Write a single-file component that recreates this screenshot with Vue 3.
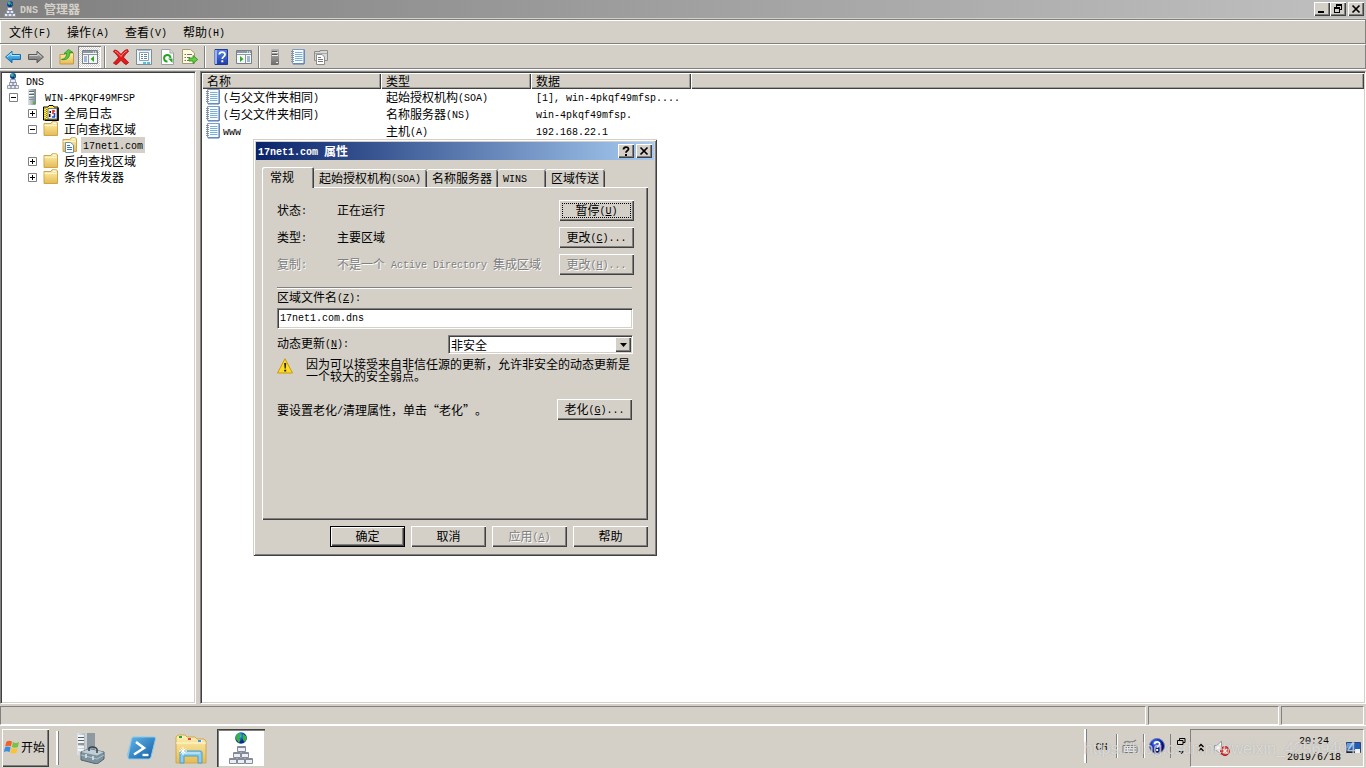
<script setup>
import { h, ref } from 'vue'

// Renders mixed Chinese / Latin text; "&" marks the mnemonic letter.
const Txt = ({ t }) => {
  const parts = t.match(/[\x20-\x7e]+|[^\x20-\x7e]+/g) || []
  return h('span', { class: 'txt' }, parts.map((part) => {
    if (!/^[\x20-\x7e]/.test(part)) return part
    const i = part.indexOf('&')
    if (i < 0) return h('span', { class: 'latin' }, part)
    return h('span', { class: 'latin' }, [part.slice(0, i), h('u', part[i + 1]), part.slice(i + 2)])
  }))
}
Txt.props = ['t']

const menus = ['文件(F)', '操作(A)', '查看(V)', '帮助(H)']

const toolGroups = [
  [{ id: 'back', label: '后退' }, { id: 'forward', label: '前进' }],
  [{ id: 'up', label: '上一级' }, { id: 'panel-left', label: '显示/隐藏控制台树', on: true }],
  [
    { id: 'delete', label: '删除' },
    { id: 'props', label: '属性' },
    { id: 'refresh', label: '刷新' },
    { id: 'export', label: '导出列表' }
  ],
  [{ id: 'help', label: '帮助' }, { id: 'panel-right', label: '显示/隐藏操作窗格' }],
  [{ id: 'server-gray', label: '新建服务器' }, { id: 'record', label: '新建记录' }, { id: 'copy', label: '新建区域' }]
]

const tree = [
  { level: 0, icon: 'dns', text: 'DNS' },
  { level: 1, icon: 'server', text: 'WIN-4PKQF49MFSP', box: '−' },
  { level: 2, icon: 'log', text: '全局日志', box: '+' },
  { level: 2, icon: 'folder', text: '正向查找区域', box: '−' },
  { level: 3, icon: 'zone', text: '17net1.com', selected: true },
  { level: 2, icon: 'folder', text: '反向查找区域', box: '+' },
  { level: 2, icon: 'folder', text: '条件转发器', box: '+' }
]

const columns = ['名称', '类型', '数据']
const records = [
  ['(与父文件夹相同)', '起始授权机构(SOA)', '[1], win-4pkqf49mfsp....'],
  ['(与父文件夹相同)', '名称服务器(NS)', 'win-4pkqf49mfsp.'],
  ['www', '主机(A)', '192.168.22.1']
]

const tabs = ['常规', '起始授权机构(SOA)', '名称服务器', 'WINS', '区域传送']
const activeTab = ref(0)
const status = [
  { label: '状态:', value: '正在运行', button: '暂停(&U)', focus: true },
  { label: '类型:', value: '主要区域', button: '更改(&C)...' },
  { label: '复制:', value: '不是一个 Active Directory 集成区域', button: '更改(&H)...', disabled: true }
]
const footer = [
  { text: '确定', primary: true },
  { text: '取消' },
  { text: '应用(&A)', disabled: true },
  { text: '帮助' }
]
const fileName = ref('17net1.com.dns')
const update = ref('非安全')
</script>

<template>
  <div class="desktop">
    <svg class="defs" aria-hidden="true">
      <defs>
        <linearGradient id="gBlue" x2="0" y2="1"><stop stop-color="#7fd0f8" /><stop offset="1" stop-color="#0f7fcc" /></linearGradient>
        <linearGradient id="gGray" x2="0" y2="1"><stop stop-color="#b4b4b4" /><stop offset="1" stop-color="#6c6c6c" /></linearGradient>
        <linearGradient id="gFolder" x2="0" y2="1"><stop stop-color="#fdf0b4" /><stop offset="1" stop-color="#e6bb52" /></linearGradient>
        <linearGradient id="gHelp" x2="0" y2="1"><stop stop-color="#5a84e8" /><stop offset="1" stop-color="#1c3cac" /></linearGradient>
        <linearGradient id="gServer"><stop stop-color="#dfe5e8" /><stop offset="1" stop-color="#7b878d" /></linearGradient>
        <linearGradient id="gPs" x2="1" y2="1"><stop stop-color="#63b7e8" /><stop offset="1" stop-color="#0f5ca5" /></linearGradient>
        <radialGradient id="gGlobe" cx=".35" cy=".3"><stop stop-color="#8fd8ff" /><stop offset=".5" stop-color="#1e74d8" /><stop offset="1" stop-color="#062c90" /></radialGradient>
        <radialGradient id="gBall" cx=".4" cy=".3"><stop stop-color="#6f8cf4" /><stop offset=".6" stop-color="#1032c0" /><stop offset="1" stop-color="#04126c" /></radialGradient>
      </defs>
      <symbol id="back" viewBox="0 0 16 16"><path d="M.5 8 7 2.200V5.500H15.500V10.500H7V13.800Z" fill="url(#gBlue)" stroke="#1a6ea8" /><path d="M2 8 6.300 4.300V6.500H14.500" fill="none" stroke="#b5e6ff" /></symbol>
      <symbol id="forward" viewBox="0 0 16 16"><path d="M15.500 8 9 2.200V5.500H.5V10.500H9V13.800Z" fill="url(#gGray)" stroke="#5a5a5a" /><path d="M1.500 6.500H9.900V4.700L13.500 8" fill="none" stroke="#cfcfcf" /></symbol>
      <symbol id="up" viewBox="0 0 16 16"><path d="M1 5.500H6L7.500 4H14.500V15H1Z" fill="url(#gFolder)" stroke="#c39a40" /><path d="M2.500 10.500C6 10 7.500 8 7.500 4.500H5L9.500 .5 14 3.500H10.800C11 8.500 8 11.500 2.500 10.500Z" fill="#5cc83c" stroke="#25851c" stroke-width=".7" /></symbol>
      <symbol id="panel-left" viewBox="0 0 16 16"><path d="M.5 1.500H15.500V14.500H.5Z" fill="#f5f7f9" stroke="#75818d" /><path d="M1 2H15V4H1Z" fill="#8b97a3" /><path d="M11 3H12M13 3H14" stroke="#fff" /><path d="M1 5H15V6H1ZM6 6H7V14H6Z" fill="#8b97a3" /><path d="M2 8H5M2 10H5M2 12H5" stroke="#5574b0" /><path d="M12 7V13L8.500 10Z" fill="#3ba51f" /></symbol>
      <symbol id="panel-right" viewBox="0 0 16 16"><path d="M.5 1.500H15.500V14.500H.5Z" fill="#f5f7f9" stroke="#75818d" /><path d="M1 2H15V4H1Z" fill="#8b97a3" /><path d="M11 3H12M13 3H14" stroke="#fff" /><path d="M1 5H15V6H1ZM9 6H10V14H9Z" fill="#8b97a3" /><path d="M11 8H14M11 10H14M11 12H14" stroke="#5574b0" /><path d="M4 7V13L7.500 10Z" fill="#3ba51f" /></symbol>
      <symbol id="delete" viewBox="0 0 16 16"><path d="M1.500 1C4 1 6 3 8 5.500 10 3 12 .5 14.500 .5L15.500 2.500C13.500 4 11.800 6 10.500 8.300 12.500 10.500 14 12 15.700 13.500L13 15.700C11 14.500 9.500 13 8 11.200 6.500 13 5 14.700 3 15.700L.3 14C2.500 12.500 4 10.500 5.500 8.300 3.700 5.500 2.200 4 .4 2.800Z" fill="#e01b1b" stroke="#a30808" stroke-width=".7" /><path d="M2 2.300C4 3 6 5 8 7.500 9.500 5 11.500 3 13.800 2" fill="none" stroke="#ff8a80" /></symbol>
      <symbol id="props" viewBox="0 0 16 16"><path d="M.5.5H15.500V15.500H.5Z" fill="#eef4f8" stroke="#7d8d99" /><path d="M3.500 3.500H12.500V11.500H3.500Z" fill="#fff" stroke="#8da4b4" /><path d="M5 5.500H7M8 5.500H11M5 7.500H7M8 7.500H11M5 9.500H7M8 9.500H11" stroke="#5b86a5" /><path d="M2 1.500H14" stroke="#aabccb" /><path d="M7 13H10V15H7ZM11 13H14V15H11Z" fill="#58bce8" /></symbol>
      <symbol id="refresh" viewBox="0 0 16 16"><path d="M2.500.5H11L14.500 4V15.500H2.500Z" fill="#fff" stroke="#9aa1a8" /><path d="M11 .5V4H14.500" fill="#e4e4e4" stroke="#9aa1a8" /><path d="M11.500 9A3.200 3.200 0 1 0 8.500 12.500" fill="none" stroke="#27a427" stroke-width="2" /><path d="M9 9.500H13.500V14Z" fill="#27a427" /></symbol>
      <symbol id="export" viewBox="0 0 16 16"><path d="M.5.5H8.500L12.500 4V14.500H.5Z" fill="#fffbe0" stroke="#a39a75" /><path d="M2.500 5.500H4M5 5.500H10M2.500 8.500H4M5 8.500H8M2.500 11.500H4M5 11.500H8" stroke="#77736a" /><path d="M7 9H11V6.500L15.700 10.500 11 14.500V12H7Z" fill="#66cc42" stroke="#258c1c" stroke-width=".8" /></symbol>
      <symbol id="help" viewBox="0 0 16 16"><path d="M2 .5H14.500V15.500H2Z" fill="url(#gHelp)" stroke="#233d91" /><path d="M2 1H4V15H2Z" fill="#9ab4f2" /><path d="M6.300 5.500C6.300 2.300 12 2.200 12 5.500 12 7.800 9.300 7.500 9.300 10" fill="none" stroke="#fff" stroke-width="1.800" /><path d="M8.300 11.300H10.300V13.300H8.300Z" fill="#fff" /></symbol>
      <symbol id="server" viewBox="0 0 16 16"><path d="M4 1 5 0H12V15L11 16H4Z" fill="url(#gServer)" /><path d="M5 2.500H10M5 5.500H10" stroke="#596870" /><path d="M5 3.500H10M5 6.500H10" stroke="#fff" /><path d="M5 8.500H10M5 10.500H10" stroke="#87959b" /><path d="M9 13H11V15H9Z" fill="#44bd36" /></symbol>
      <symbol id="server-gray" viewBox="0 0 16 16"><path d="M4 1 5 0H12V15L11 16H4Z" fill="url(#gGray)" /><path d="M5 3.500H11M5 6.500H11" stroke="#eee" /><path d="M5 2.500H10M5 5.500H10" stroke="#555" /><path d="M9 13H11V14H9Z" fill="#eee" /></symbol>
      <symbol id="record" viewBox="0 0 16 16"><path d="M2.500.5H14.500V14.500H2.500Z" fill="#f8fcff" stroke="#7d9cc8" /><path d="M14 1V15H3" fill="none" stroke="#5577ae" /><path d="M5 3.500H12.500M5 5.500H12.500M5 7.500H12.500M5 9.500H12.500M5 11.500H12.500" stroke="#79b2d8" /><path d="M1 2.500H4M1 4.500H4M1 6.500H4M1 8.500H4M1 10.500H4M1 12.500H4" stroke="#8a9299" /></symbol>
      <symbol id="copy" viewBox="0 0 16 16"><path d="M1.500 2.500H7V1.500H14.500V11.500H1.500Z" fill="#d8d8d8" stroke="#8c8c8c" /><path d="M2 4.500H14" stroke="#aaa" /><path d="M3.500 5.500H9L11.500 8V15.500H3.500Z" fill="#fff" stroke="#8c8c8c" /><path d="M5 8.500H8M5 10.500H10M5 12.500H10" stroke="#777" /></symbol>
      <symbol id="folder" viewBox="0 0 16 16"><path d="M1 2.500H8L9 .8H13.500L14.500 2V14.500H1Z" fill="url(#gFolder)" stroke="#d0a44a" /><path d="M10 2H13" stroke="#fff" /><path d="M1.500 4.500H14" stroke="#fff5ca" /></symbol>
      <symbol id="zone" viewBox="0 0 16 16"><use href="#folder" /><path d="M3.500 5.500H8.500L11.500 8V15.500H3.500Z" fill="#fff" stroke="#6b8eb5" /><path d="M5 8.500H8M5 10.500H10M5 12.500H10" stroke="#3674c0" /></symbol>
      <symbol id="log" viewBox="0 0 16 16"><path d="M.5 2H5L6 .5H10L11 2H15V15H.5Z" fill="#ffee54" stroke="#000" /><path d="M5 3.500H14V14H5Z" fill="#f4f4f4" stroke="#777" /><path d="M15 3V15.500H2" fill="none" stroke="#000" stroke-width="1.500" /><path d="M2 3V14M3.500 4V14" stroke="#8a7a00" stroke-dasharray="1 1" /><path d="M6.500 6H8V8H6.500ZM6 9H7.500V12H6Z" fill="#111" /><path d="M10 5V9M10 6H12" stroke="#d22" stroke-width="1.500" /><path d="M11.500 8V12M9 12H12" stroke="#2345d5" stroke-width="1.500" /></symbol>
      <symbol id="dns" viewBox="0 0 16 16"><circle cx="8" cy="3" r="3" fill="url(#gGlobe)" /><path d="M6 1.500 8 1 8.500 3 7 4ZM9 3 10.500 2 10 5Z" fill="#43b83c" /><path d="M5.500 6.500H10.500V9.500H5.500ZM4.500 9.500H8V12.500H4.500ZM8 9.500H11.500V12.500H8ZM2.500 12.500H6V15.500H2.500ZM6 12.500H10V15.500H6ZM10 12.500H13.500V15.500H10Z" fill="#e9ebef" stroke="#8289a0" stroke-width=".8" /></symbol>
      <symbol id="dns-big" viewBox="0 0 32 32">
        <circle cx="16" cy="6" r="5.800" fill="url(#gGlobe)" /><path d="M11.500 3 15 .8 16 3 14 6 15.500 8 14 11 11 7ZM18 2 21 4 21.500 8 19 10 17.500 6Z" fill="#39b538" />
        <g fill="#eceef1" stroke="#858b98"><path d="M12.500 14.500H20.500V19.500H12.500ZM8.500 20.500H15.500V25.500H8.500ZM16.500 20.500H23.500V25.500H16.500ZM4.500 26.500H11.500V31.500H4.500ZM12.500 26.500H19.500V31.500H12.500ZM20.500 26.500H27.500V31.500H20.500Z" /></g>
        <path d="M13 15.500H20M9 21.500H15M17 21.500H23M5 27.500H11M13 27.500H19M21 27.500H27" stroke="#858b98" />
      </symbol>
    </svg>

    <header class="titlebar">
      <svg class="ic"><use href="#dns" /></svg>
      <h1><Txt t="DNS 管理器" /></h1>
      <div class="winbtns">
        <button class="cap" aria-label="最小化"><svg viewBox="0 0 12 10"><path d="M2 7H8V9H2Z" /></svg></button>
        <button class="cap" aria-label="还原"><svg viewBox="0 0 12 10"><path d="M4 0H10V6H8V5H9V2H5V3H4ZM2 3H8V9H2ZM3 5V8H7V5Z" fill-rule="evenodd" /></svg></button>
        <button class="cap gap" aria-label="关闭"><svg viewBox="0 0 12 10"><path d="M2.500 1.500 9.500 8.500M9.500 1.500 2.500 8.500" stroke="#000" stroke-width="1.700" /></svg></button>
      </div>
    </header>

    <nav class="menubar">
      <button v-for="m in menus" :key="m"><Txt :t="m" /></button>
    </nav>

    <div class="toolbar" role="toolbar">
      <div v-for="(g, i) in toolGroups" :key="i" class="group">
        <button v-for="b in g" :key="b.id" :class="{ on: b.on }" :aria-label="b.label">
          <svg class="ic"><use :href="'#' + b.id" /></svg>
        </button>
      </div>
    </div>

    <main class="panes">
      <ul class="tree" role="tree">
        <li v-for="n in tree" :key="n.text" role="treeitem" :class="['level' + n.level, { selected: n.selected }]">
          <button v-if="n.box" class="expander" :aria-label="n.box === '+' ? '展开' : '折叠'">
            <svg viewBox="0 0 9 9"><path d="M.5.5H8.500V8.500H.5Z" fill="#fff" stroke="#808080" /><path d="M2 4.500H7" stroke="#000" /><path v-if="n.box === '+'" d="M4.500 2V7" stroke="#000" /></svg>
          </button>
          <svg class="ic"><use :href="'#' + n.icon" /></svg>
          <span class="node"><Txt :t="n.text" /></span>
        </li>
      </ul>

      <section class="list">
        <table>
          <colgroup><col class="c1" /><col class="c2" /><col class="c3" /><col /></colgroup>
          <thead>
            <tr><th v-for="c in columns" :key="c"><Txt :t="c" /></th><th class="rest"></th></tr>
          </thead>
          <tbody>
            <tr v-for="(r, i) in records" :key="i">
              <td><div class="name"><svg class="ic"><use href="#record" /></svg><Txt :t="r[0]" /></div></td>
              <td><Txt :t="r[1]" /></td>
              <td><Txt :t="r[2]" /></td>
              <td></td>
            </tr>
          </tbody>
        </table>
      </section>
    </main>

    <div class="statusbar"><div></div><div></div><div></div></div>

    <footer class="taskbar">
      <button class="start">
        <svg viewBox="0 0 18 18"><path d="M2.500 3.500C4.500 2 6.500 2 8.500 3.300L7.300 8.500C5.500 7.300 3.500 7.300 1.200 8.500Z" fill="#f0622d" /><path d="M9.500 3.800C11.500 5 13.500 5 16 3.800L14.700 9C12.500 10.200 10.300 10 8.300 9Z" fill="#7bc142" /><path d="M1 9.500C3 8.300 5 8.300 7 9.500L5.800 14.500C4 13.300 2 13.300-.2 14.500Z" fill="#3a8de0" /><path d="M8 10C10 11.200 12 11.200 14.400 10L13.200 15.200C11 16.300 9 16.300 6.800 15Z" fill="#fcc42c" /></svg>
        <Txt t="开始" />
      </button>
      <span class="grip"></span>
      <div class="apps">
        <button aria-label="服务器管理器">
          <svg viewBox="0 0 32 32"><path d="M2 1H20V23H2Z" fill="url(#gServer)" /><path d="M3 4H9M3 7H9M3 10H9M3 15H9M3 18H9" stroke="#fff" stroke-width="1.500" /><path d="M3 5.500H9M3 8.500H9M3 12H9" stroke="#53626a" /><path d="M10 1H20V22H10Z" fill="#8e9a9f" /><path d="M10 1H12V22H10Z" fill="#c9d1d5" /><path d="M6 20 14 17 29 20V27L22 32 6 28Z" fill="#7d929f" stroke="#52636f" /><path d="M6 20 14 17 29 20 22 23.500Z" fill="#c0ced5" /><path d="M14 19V16C15 14 21 15 22 17V21" fill="none" stroke="#34434c" stroke-width="1.500" /><path d="M6 23 22 27 29 23" fill="none" stroke="#b3c3cc" /><path d="M11 22V26M18 24V28" stroke="#e2e9ec" stroke-width="1.500" /></svg>
        </button>
        <button aria-label="PowerShell">
          <svg viewBox="0 0 32 32"><path d="M2 24 6 10M3.500 25 8 8" stroke="#8cc4e6" /><path d="M8.500 5H29Q31 5 30.500 7L26 25Q25.500 27 23.500 27H4.500Q2.500 27 3 25L6.500 7Q7 5 8.500 5Z" fill="url(#gPs)" stroke="#8ec9ea" /><path d="M11 10 19 16 9 22.500" fill="none" stroke="#fff" stroke-width="2.600" /><path d="M17.500 23H23.500" stroke="#fff" stroke-width="2.400" /></svg>
        </button>
        <button aria-label="资源管理器">
          <svg viewBox="0 0 32 32"><path d="M1 5 3 3H10L12 5H20L22 7H29L31 9V31H1Z" fill="url(#gFolder)" stroke="#d2a84e" /><path d="M4 5H8M13 7H17M23 9H27" stroke-width="2" stroke="#fff" /><path d="M4 5H7" stroke="#26a824" stroke-width="2" /><path d="M13 7H16" stroke="#df4a2b" stroke-width="2" /><path d="M23 9H26" stroke="#3a9be2" stroke-width="2" /><path d="M1 11H31" stroke="#fff9d8" /><path d="M5 31V21Q5 19 7 19H25Q27 19 27 21V31H23V24H9V31Z" fill="#8acdec" stroke="#4b9dcc" /><path d="M7 21H25" stroke="#dbf3ff" /><path d="M8 15V23M4 19H12M5.500 16.500 10.500 21.500M10.500 16.500 5.500 21.500" stroke="#fff" /></svg>
        </button>
        <button class="active" aria-label="DNS"><svg><use href="#dns-big" /></svg></button>
      </div>
      <div class="lang">
        <span class="grip"></span>
        <button class="ch"><Txt t="CH" /></button>
        <button class="kbd" aria-label="输入法"><svg viewBox="0 0 16 16"><path d="M1 7.500H15V14.500H1Z" fill="#e8e8e8" stroke="#777" /><path d="M3 9.500H5M6 9.500H8M9 9.500H11M12 9.500H14M3 12H5M6 12H11M12 12H14" stroke="#777" /><path d="M2 5C5 1 8 7 14 2" fill="none" stroke="#888" stroke-width="1.500" /></svg></button>
        <button class="kbd" aria-label="帮助"><svg viewBox="0 0 16 16"><circle cx="8" cy="8" r="7.500" fill="url(#gBall)" stroke="#6c7ab8" /><path d="M5.500 6.300C5.500 3 10.700 3.200 10.700 6 10.700 8 8.200 7.800 8.200 9.800" fill="none" stroke="#fff" stroke-width="1.800" /><path d="M7.200 11H9.200V13H7.200Z" fill="#fff" /></svg></button>
        <button class="mini" aria-label="选项"><svg viewBox="0 0 9 18"><path d="M2.500 3.500V1.500H8V5.500H6M.5 3.500H6V7.500H.5Z" fill="none" stroke="#000" /><path d="M1.500 14H7.500L4.500 17Z" /></svg></button>
      </div>
      <div class="tray">
        <button class="chev" aria-label="显示隐藏的图标"><svg viewBox="0 0 6 10"><path d="M.5 4 3 1.500 5.500 4M.5 8 3 5.500 5.500 8" fill="none" stroke="#000" stroke-width="1.400" /></svg></button>
        <button class="sound" aria-label="音量"><svg viewBox="0 0 16 16"><path d="M.5 5.500H3L7.500 1V15L3 10.500H.5Z" fill="#fff" stroke="#999" /><circle cx="11" cy="11" r="4.500" fill="#e23a35" stroke="#ac1714" /><path d="M9 9 13 13M13 9 9 13" stroke="#fff" stroke-width="1.500" /></svg></button>
        <time class="clock"><Txt t="20:24" /><Txt t="2019/6/18" /></time>
        <button class="show" aria-label="显示桌面"><svg viewBox="0 0 15 14"><path d="M.5 1.500H14.500V11.500H.5Z" fill="#1f5ebc" stroke="#2b4570" /><path d="M1 2 9 2 4 8 1 7Z" fill="#5da1ee" /><path d="M1 10H9V12H1Z" fill="#17243c" /><path d="M9 8H14V12H9Z" fill="#eef3f8" /></svg></button>
      </div>
      <span class="watermark">https://blog.csdn.net/weixin_42569404</span>
    </footer>

    <div class="dialog" role="dialog" aria-labelledby="dlgTitle">
      <div class="dlg-title">
        <h2 id="dlgTitle"><Txt t="17net1.com 属性" /></h2>
        <button class="cap" aria-label="帮助"><svg viewBox="0 0 12 10"><path d="M3.500 3.500C3.500.3 8.500.3 8.500 3 8.500 5 6 4.500 6 6.700" fill="none" stroke="#000" stroke-width="1.800" /><path d="M5 8H7V10H5Z" /></svg></button>
        <button class="cap gap" aria-label="关闭"><svg viewBox="0 0 12 10"><path d="M2.500 1.500 9.500 8.500M9.500 1.500 2.500 8.500" stroke="#000" stroke-width="1.700" /></svg></button>
      </div>
      <div class="tabs" role="tablist">
        <button v-for="(t, i) in tabs" :key="t" role="tab" :aria-selected="activeTab === i" :class="{ active: activeTab === i }" @click="activeTab = i"><Txt :t="t" /></button>
      </div>
      <div class="page" role="tabpanel">
        <div class="status">
          <div v-for="s in status" :key="s.label" class="row" :class="{ off: s.disabled }">
            <span class="key"><Txt :t="s.label" /></span>
            <span class="val"><Txt :t="s.value" /></span>
            <button class="btn" :class="{ focus: s.focus }" :disabled="s.disabled"><Txt :t="s.button" /></button>
          </div>
        </div>
        <hr />
        <label for="zoneFile" class="file-label"><Txt t="区域文件名(&Z):" /></label>
        <input id="zoneFile" v-model="fileName" type="text" />
        <div class="update">
          <label for="dyn"><Txt t="动态更新(&N):" /></label>
          <div class="combo">
            <select id="dyn" v-model="update"><option>非安全</option></select>
            <span class="drop"><svg viewBox="0 0 7 4"><path d="M0 0H7L3.500 4Z" /></svg></span>
          </div>
        </div>
        <div class="warn">
          <svg viewBox="0 0 16 16"><path d="M8 .8 15.500 15H.5Z" fill="#fddb22" stroke="#c99a0c" stroke-linejoin="round" /><path d="M7.200 5H9.200L8.800 10.500H7.600Z" fill="#222" /><path d="M7.200 11.700H9.200V13.500H7.200Z" fill="#222" /></svg>
          <p>因为可以接受来自非信任源的更新，允许非安全的动态更新是一个较大的安全弱点。</p>
        </div>
        <div class="aging">
          <span class="hint"><Txt t="要设置老化/清理属性，单击“老化”。" /></span>
          <button class="btn"><Txt t="老化(&G)..." /></button>
        </div>
      </div>
      <div class="dlg-footer">
        <button v-for="b in footer" :key="b.text" class="btn" :class="{ primary: b.primary }" :disabled="b.disabled"><Txt :t="b.text" /></button>
      </div>
    </div>
  </div>
</template>

<style>
body { margin: 0; overflow: hidden; }
.txt { white-space: pre; }
.latin { font-family: "Liberation Mono", "Noto Sans CJK SC", monospace; font-size: 10px; line-height: 0; vertical-align: 1px; }
.latin u { text-underline-offset: 1px; }
</style>

<style scoped>
* { box-sizing: border-box; }
.desktop {
  --face: #d4d0c8;
  position: relative;
  display: flex;
  flex-direction: column;
  min-height: 100vh;
  background: var(--face);
  color: #000;
  font: 12px/16px "Noto Sans CJK SC", "Liberation Sans", sans-serif;
  text-spacing-trim: space-all;
}
.defs { position: absolute; width: 0; height: 0; }
svg { display: block; flex: none; }
.ic { width: 16px; height: 16px; }
button { margin: 0; padding: 0; border: 0; background: transparent; color: inherit; font: inherit; }
h1, h2, p, ul { margin: 0; padding: 0; font-size: 12px; }
.cap {
  display: flex;
  align-items: center;
  justify-content: center;
  width: 16px;
  height: 14px;
  background: var(--face);
  box-shadow: inset 1px 1px #fff, inset -1px -1px #404040, inset -2px -2px #808080;
}
.cap svg { width: 12px; height: 10px; }
.cap.gap { margin-left: 2px; }

.titlebar { display: flex; align-items: center; height: 18px; padding: 0 2px; background: linear-gradient(90deg, #808080, #c0c0c0); color: var(--face); }
.titlebar h1 { flex: 1; margin-left: 2px; line-height: 16px; }
.winbtns { display: flex; }

.menubar { display: flex; gap: 16px; height: 25px; margin-top: 1px; padding: 1px 9px 0; border: 1px solid #808080; border-left: 0; box-shadow: inset 1px 1px #fff; }
.toolbar { display: flex; align-items: center; height: 25px; padding: 0 1px; border: 1px solid #808080; border-left: 0; border-top-color: #fff; box-shadow: inset 1px 0 #fff, 0 1px #fff; }
.group { display: flex; }
.group + .group { margin-left: 3px; padding-left: 4px; border-left: 1px solid #808080; box-shadow: inset 1px 0 #fff; }
.group button { display: flex; align-items: center; justify-content: center; width: 23px; height: 22px; }
.group button.on { background: repeating-conic-gradient(#fff 0 25%, #d4d0c8 0 50%) 0 0 / 2px 2px; box-shadow: inset 1px 1px #808080, inset -1px -1px #fff; }

.panes { display: flex; flex: 1; gap: 4px; margin-top: 2px; }
.tree, .list { background: #fff; border: 1px solid; border-color: #808080 #fff #fff #808080; box-shadow: inset 1px 1px #404040, inset -1px -1px var(--face); }
.tree { width: 196px; padding: 1px; list-style: none; }
.tree li { display: flex; align-items: center; height: 16px; }
.level0 { padding-left: 3px; }
.level1 { padding-left: 7px; }
.level2 { padding-left: 26px; }
.level3 { padding-left: 60px; }
.expander { width: 9px; height: 9px; margin-right: 6px; }
.expander svg { width: 9px; height: 9px; }
.node { margin-left: 3px; padding: 0 2px; }
.selected .node { height: 16px; background: var(--face); }

.list { flex: 1; padding: 1px; }
table { width: 100%; table-layout: fixed; border-collapse: collapse; }
.c1 { width: 179px; }
.c2 { width: 150px; }
.c3 { width: 160px; }
th, td { padding: 0 5px; text-align: left; font-weight: 400; white-space: nowrap; }
th { height: 16px; background: var(--face); box-shadow: inset 1px 1px #fff, inset -1px -1px #404040, inset -2px -2px #a09d97; line-height: 16px; }
td { height: 17px; padding-bottom: 1px; line-height: 16px; }
.name { display: flex; align-items: center; gap: 2px; margin-left: -2px; }

.statusbar { display: grid; grid-template-columns: 1fr 131px 83px; gap: 2px; height: 19px; margin-top: 2px; padding-right: 2px; }
.statusbar div { border: 1px solid; border-color: #808080 #fff #fff #808080; }

.taskbar { position: relative; display: flex; align-items: center; height: 43px; padding: 2px 2px 1px; border-top: 1px solid #fff; }
.start { display: flex; align-items: center; width: 47px; height: 38px; padding: 0 0 2px 2px; box-shadow: inset 1px 1px #fff, inset -1px -1px #404040, inset -2px -2px #808080; }
.start svg { width: 17px; height: 18px; }
.grip { width: 3px; height: 34px; margin-left: 7px; border-left: 2px solid #fff; border-right: 1px solid #808080; }
.apps { display: flex; gap: 2px; margin-left: 8px; }
.apps button { display: flex; align-items: center; justify-content: center; width: 48px; height: 38px; }
.apps svg { width: 32px; height: 32px; }
.apps .active { background: #fff; box-shadow: inset 1px 1px #404040, inset 2px 2px #808080, inset -1px -1px var(--face); }
.lang { display: flex; align-items: center; margin-left: auto; padding-bottom: 4px; }
.lang .grip { margin: 0; }
.ch { width: 30px; height: 24px; border-right: 1px solid #808080; }
.kbd { display: flex; align-items: center; justify-content: center; width: 27px; height: 24px; border-right: 1px solid #808080; box-shadow: inset 1px 0 #fff; }
.kbd svg { width: 16px; height: 16px; }
.mini { width: 19px; padding-left: 6px; }
.mini svg { width: 9px; height: 18px; }
.tray { display: flex; align-items: center; width: 174px; height: 38px; padding-left: 7px; border: 1px solid; border-color: #808080 #fff #fff #808080; }
.chev svg { width: 6px; height: 10px; }
.sound { margin-left: 10px; }
.sound svg { width: 16px; height: 16px; }
.clock { display: flex; flex-direction: column; align-items: center; margin-left: auto; }
.show { margin: 0 2px 0 5px; }
.show svg { width: 15px; height: 14px; }
.watermark { position: absolute; right: 10px; bottom: 9px; color: rgba(255, 255, 255, .6); font: 16px/20px "Liberation Sans", sans-serif; text-shadow: 0 0 1px rgba(120, 120, 120, .6); pointer-events: none; }

.dialog { position: absolute; left: 253px; top: 139px; width: 404px; padding: 3px; background: var(--face); box-shadow: inset 1px 1px var(--face), inset -1px -1px #404040, inset 2px 2px #fff, inset -2px -2px #808080; }
.dlg-title { display: flex; align-items: center; height: 18px; padding: 0 2px; background: linear-gradient(90deg, #0a246a, #a6caf0); color: #fff; }
.dlg-title h2 { flex: 1; line-height: 16px; }
.dlg-title .cap { color: #000; }
.tabs { display: flex; align-items: flex-end; height: 27px; margin: 0 6px; }
.tabs button { min-width: 48px; height: 18px; padding: 0 6px 0 5px; border-radius: 2px 2px 0 0; box-shadow: inset 0 1px #fff, inset -1px 0 #404040, inset -2px 0 #808080; text-align: left; }
.tabs .active { position: relative; min-width: 52px; height: 21px; margin-bottom: -1px; padding: 0 8px 2px; background: var(--face); box-shadow: inset 1px 1px #fff, inset -1px 0 #404040, inset -2px 0 #808080; }
.page { min-height: 333px; margin: 0 6px; padding: 13px 14px 12px 15px; box-shadow: inset 1px 1px #fff, inset -1px -1px #404040, inset -2px -2px #808080; }
.status { display: grid; gap: 6px; }
.row { display: flex; align-items: flex-start; line-height: 20px; }
.key { width: 60px; }
.val { flex: 1; }
.off { color: #808080; text-shadow: 1px 1px #fff; }
.btn { width: 75px; height: 21px; padding-bottom: 1px; background: var(--face); box-shadow: inset 1px 1px #fff, inset -1px -1px #404040, inset -2px -2px #808080; line-height: 16px; }
.btn.focus { outline: 1px dotted #000; outline-offset: -4px; }
.btn:disabled { color: #808080; text-shadow: 1px 1px #fff; }
.btn.primary { border: 1px solid #000; }
hr { height: 2px; margin: 12px 2px 0 0; border: 0; border-top: 1px solid #808080; border-bottom: 1px solid #fff; }
.file-label { display: block; margin-bottom: 3px; }
input, .combo { border: 1px solid; border-color: #808080 #fff #fff #808080; background: #fff; box-shadow: inset 1px 1px #404040, inset -1px -1px var(--face); }
input { display: block; width: calc(100% - 1px); height: 21px; padding: 0 2px; border-radius: 0; font: 10px/16px "Liberation Mono", monospace; }
.update { display: flex; align-items: flex-start; justify-content: space-between; margin: 6px 1px 0 0; }
.combo { position: relative; width: 185px; height: 19px; }
select { display: block; width: 100%; height: 17px; padding: 1px 2px 0; border: 0; appearance: none; background: transparent; color: #000; font: 12px/16px "Noto Sans CJK SC", sans-serif; }
.drop { position: absolute; top: 1px; right: 1px; display: flex; align-items: center; justify-content: center; width: 16px; height: 15px; background: var(--face); box-shadow: inset 1px 1px #fff, inset -1px -1px #404040, inset -2px -2px #808080; pointer-events: none; }
.drop svg { width: 7px; height: 4px; }
.warn { display: flex; gap: 13px; margin: 4px 0 0; }
.warn svg { width: 16px; height: 16px; }
.warn p { flex: 1; line-height: 12px; }
.aging { display: flex; align-items: center; justify-content: space-between; margin: 17px 2px 0 0; }
.dlg-footer { display: flex; justify-content: flex-end; gap: 6px; margin: 6px 6px; }
</style>
